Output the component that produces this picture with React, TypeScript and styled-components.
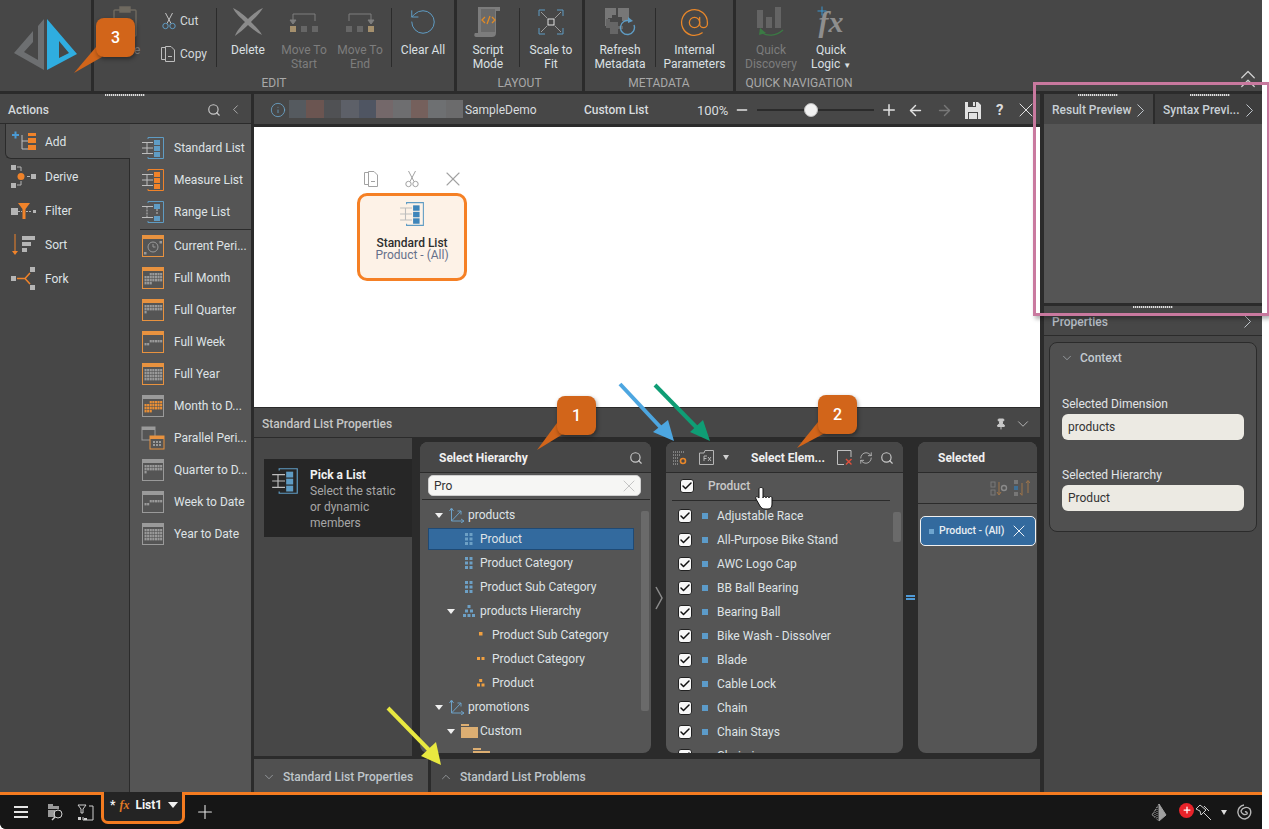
import React from 'react';
import styled, { createGlobalStyle } from 'styled-components';
import {
  ArrowLeft, ArrowRight, AtSign, ChevronDown, ChevronLeft, ChevronUp, ChevronsUp,
  Check, Info, Minus, Pin, Plus, RefreshCw, RotateCcw, Search, X,
} from 'lucide-react';

const GlobalStyle = createGlobalStyle`
  html, body { margin: 0; padding: 0; background: #fff; }
  body { font-family: Roboto, "Open Sans", "Liberation Sans", sans-serif; font-size: 12px; color: #dfe3e6; }
  * { box-sizing: border-box; }
  svg { flex: none; }
`;

const Page = styled.div`
  position: relative;
  width: 1269px;
  height: 829px;
  overflow: hidden;
  background: #fff;
`;

const Shell = styled.div`
  display: flex;
  flex-direction: column;
  width: 1262px;
  height: 829px;
  background: #2b2b2b;
  border-bottom-left-radius: 6px;
  overflow: hidden;
`;

/* ribbon */
const Ribbon = styled.header`
  display: flex;
  gap: 3px;
  height: 91px;
  flex: none;
`;

const LogoBox = styled.div`
  width: 91px;
  background: #474747;
`;

const RibbonGroup = styled.section<{ $w?: number }>`
  position: relative;
  display: flex;
  flex-direction: column;
  background: #474747;
  ${(p) => (p.$w ? `width: ${p.$w}px;` : 'flex: 1;')}
`;

const GroupInner = styled.div<{ $w?: number }>`
  display: flex;
  flex-direction: column;
  height: 100%;
  ${(p) => (p.$w ? `width: ${p.$w}px;` : '')}
`;

const GroupButtons = styled.div`
  display: flex;
  height: 75px;
`;

const GroupLabel = styled.div`
  text-align: center;
  font-size: 12px;
  line-height: 16px;
  color: #a9a9a9;
`;

const RibbonButton = styled.div<{ $w: number; $off?: boolean }>`
  width: ${(p) => p.$w}px;
  flex: none;
  display: flex;
  flex-direction: column;
  align-items: center;
  padding-top: 1px;
  text-align: center;
  white-space: nowrap;
  font-size: 12px;
  line-height: 14px;
  color: ${(p) => (p.$off ? '#7d7d7d' : '#dbe0e3')};
`;

const RibbonIcon = styled.div`
  height: 42px;
  display: flex;
  align-items: center;
  justify-content: center;
`;

const RibbonDivider = styled.div`
  width: 1px;
  height: 59px;
  margin-top: 8px;
  background: #2b2b2b;
  flex: none;
`;

const SmallColumn = styled.div`
  width: 60px;
  flex: none;
  display: flex;
  flex-direction: column;
  gap: 17px;
  padding: 13px 0 0 5px;
`;

const SmallButton = styled.div`
  display: flex;
  align-items: center;
  gap: 3px;
  height: 16px;
  color: #d5d9dc;
`;

const CopySlot = styled.span`
  margin-left: -2px;
  line-height: 0;
`;

const CollapseRibbon = styled.div`
  position: absolute;
  right: -1px;
  bottom: -3px;
  color: #cfcfcf;
  line-height: 0;
`;

const FxMark = styled.span`
  position: relative;
  display: block;
  height: 30px;
  font-family: "Liberation Serif", serif;
  font-style: italic;
  font-weight: 700;
  font-size: 30px;
  line-height: 30px;
  color: #8e8e8e;
`;

const FxPlus = styled.span`
  position: absolute;
  display: block;
  left: -4px;
  top: -3px;
  color: #3aa0e0;
  line-height: 0;
`;

const Caret = styled.span`
  font-size: 8px;
`;

/* workspace */
const Workspace = styled.main`
  flex: 1;
  min-height: 0;
  display: grid;
  grid-template-columns: 251px 786px 219px;
  grid-template-rows: minmax(0, 1fr);
  gap: 3px;
  margin-top: 3px;
`;

const Handle = styled.i<{ $left: number; $top?: number }>`
  position: absolute;
  left: ${(p) => p.$left}px;
  top: ${(p) => p.$top ?? 0}px;
  width: 40px;
  height: 2px;
  background: repeating-linear-gradient(90deg, #ddd 0 1px, #777 1px 2px);
`;

const LeftPanel = styled.aside`
  position: relative;
  display: flex;
  flex-direction: column;
  background: #474747;
`;

const PanelHeader = styled.div<{ $h?: number }>`
  display: flex;
  align-items: center;
  height: ${(p) => p.$h ?? 30}px;
  flex: none;
  padding: 2px 8px 0;
  font-weight: 500;
  color: #d3d8dc;
  border-bottom: 1px solid #2b2b2b;
`;

const HeaderTools = styled.div`
  margin-left: auto;
  display: flex;
  align-items: center;
  gap: 7px;
  color: #c8c8c8;
  line-height: 0;
`;

const LeftBody = styled.div`
  flex: 1;
  min-height: 0;
  display: flex;
`;

const ActionColumn = styled.div`
  width: 130px;
  flex: none;
  padding: 2px 0 0 5px;
  border-right: 1px solid #2b2b2b;
`;

const ActionRow = styled.div<{ $active?: boolean }>`
  display: flex;
  align-items: center;
  gap: 8px;
  height: 34px;
  padding-left: 6px;
  margin-right: ${(p) => (p.$active ? '-1px' : '0')};
  ${(p) => p.$active && `
    margin-top: -2px;
    padding-top: 2px;
    height: 35px;
    margin-bottom: 1px;
    background: #505050;
    border-left: 1px solid #2b2b2b;
    border-bottom: 1px solid #2b2b2b;
    border-bottom-left-radius: 6px;
    padding-left: 5px;
  `}
`;

const ActionIcon = styled.span`
  width: 26px;
  flex: none;
  display: flex;
  line-height: 0;
`;

const ListColumn = styled.div`
  flex: 1;
  background: #555;
  padding-top: 8px;
`;

const ListGroup = styled.div`
  margin-left: 10px;
  padding-bottom: 1px;
  border-bottom: 1px solid #2b2b2b;
`;

const ListRow = styled.div<{ $inset?: boolean }>`
  display: flex;
  align-items: center;
  gap: 9px;
  height: 32px;
  padding-left: ${(p) => (p.$inset ? '11px' : '1px')};
  white-space: nowrap;
`;

const CenterPanel = styled.div`
  display: flex;
  flex-direction: column;
  min-width: 0;
`;

const DocHeader = styled.div`
  display: flex;
  align-items: center;
  height: 30px;
  flex: none;
  background: #474747;
  padding: 2px 0 0 16px;
  color: #d8dcdf;
`;

const BlurStrip = styled.div`
  display: flex;
  height: 18px;
  margin: -2px 0 0 3px;
`;

const BlurCell = styled.i<{ $c: string }>`
  width: 17.4px;
  background: ${(p) => p.$c};
`;

const DocTitle = styled.span`
  margin-left: 2px;
  width: 119px;
`;

const DocKind = styled.span`
  width: 113px;
  font-weight: 500;
`;

const Zoom = styled.span`
  font-size: 13px;
  width: 37px;
`;

const SliderTrack = styled.div`
  position: relative;
  width: 117px;
  height: 2px;
  margin: 0 6px 0 7px;
  background: #2b2b2b;
`;

const SliderThumb = styled.div`
  position: absolute;
  left: 47px;
  top: -6px;
  width: 14px;
  height: 14px;
  border-radius: 50%;
  background: #f2f2f2;
  border: 1px solid #bbb;
`;

const DocTools = styled.div`
  display: flex;
  align-items: center;
  gap: 12px;
  line-height: 0;
  color: #e2e2e2;
`;

const PlusTool = styled(Plus)`
  margin-right: -3px;
`;

const CloseTool = styled(X)`
  margin: -4px;
`;

const HelpMark = styled.span`
  font-size: 15px;
  font-weight: 700;
  line-height: 16px;
  color: #dcdcdc;
  margin: 0 3px;
`;

const Canvas = styled.div`
  position: relative;
  margin-top: 3px;
  height: 280px;
  flex: none;
  background: #fff;
`;

const NodeTools = styled.div`
  position: absolute;
  left: 96px;
  top: 40px;
  display: grid;
  grid-template-columns: repeat(3, 41px);
  justify-items: center;
  align-items: center;
  height: 22px;
  color: #a2a2a2;
  line-height: 0;
`;

const NodeCard = styled.div`
  position: absolute;
  left: 103px;
  top: 66px;
  width: 110px;
  height: 88px;
  display: flex;
  flex-direction: column;
  align-items: center;
  padding-top: 5px;
  background: #fdf2e7;
  border: 3px solid #f58025;
  border-radius: 10px;
  line-height: 12px;
`;

const NodeTitle = styled.div`
  margin-top: 10px;
  font-weight: 500;
  color: #2e2e2e;
`;

const NodeSub = styled.div`
  color: #66708a;
`;

const PropsPane = styled.section`
  margin-top: 1px;
  flex: 1;
  min-height: 0;
  display: flex;
  flex-direction: column;
  background: #2b2b2b;
`;

const PropsHeader = styled(PanelHeader)`
  background: #474747;
  color: #c6c6c6;
`;

const PropsBody = styled.div`
  flex: 1;
  min-height: 0;
  display: flex;
  padding: 4px 3px 6px 0;
`;

const PickPane = styled.div`
  width: 158px;
  flex: none;
  margin: -4px 8px -3px 0;
  padding: 21px 0 0 10px;
  background: #474747;
`;

const PickBox = styled.div`
  display: flex;
  gap: 11px;
  height: 78px;
  padding: 8px 16px 0 7px;
  background: #262626;
  line-height: 16px;
  color: #a6a6a6;
`;

const PickTitle = styled.div`
  font-weight: 700;
  color: #f0f0f0;
`;

const Card = styled.div<{ $w: number }>`
  position: relative;
  width: ${(p) => p.$w}px;
  flex: none;
  display: flex;
  flex-direction: column;
  background: #555;
  border-radius: 8px;
  overflow: hidden;
`;

const CardHeader = styled.div`
  display: flex;
  align-items: center;
  height: 31px;
  flex: none;
  padding-top: 1px;
  background: #474747;
  border-bottom: 1px solid #2b2b2b;
  font-weight: 700;
  color: #f0f0f0;
`;

const HierTitle = styled.span`
  margin-left: 19px;
`;

const HierSearch = styled(Search)`
  margin-right: 8px;
`;

const SearchRow = styled.div`
  height: 27px;
  flex: none;
  margin: 0 1px 0 2px;
  padding: 2px 9px 0 6px;
  border-bottom: 1px solid #2b2b2b;
`;

const SearchInput = styled.div`
  display: flex;
  align-items: center;
  justify-content: space-between;
  height: 21px;
  padding: 0 1px 0 5px;
  border-radius: 5px;
  background: #f6f6f4;
  border: 1px solid #cfcfcf;
  color: #333;
  line-height: 0;
`;

const Tree = styled.div`
  padding: 4px 0 0 8px;
`;

const TreeRow = styled.div<{ $level: number; $selected?: boolean }>`
  display: flex;
  align-items: center;
  width: 206px;
  height: 22px;
  margin-bottom: 2px;
  padding-left: ${(p) => p.$level * 12 + 5}px;
  white-space: nowrap;
  border: 1px solid ${(p) => (p.$selected ? '#1f4a75' : 'transparent')};
  background: ${(p) => (p.$selected ? '#336a9e' : 'transparent')};
`;

const TreeCaret = styled.span<{ $show?: boolean }>`
  width: 12px;
  flex: none;
  margin-left: -1px;
  margin-right: 4px;
  display: flex;
  justify-content: center;
  &::before {
    content: '';
    display: ${(p) => (p.$show ? 'block' : 'none')};
    border-left: 4px solid transparent;
    border-right: 4px solid transparent;
    border-top: 5px solid #f0f0f0;
  }
`;

const TreeIcon = styled.span`
  width: 16px;
  flex: none;
  margin-right: 3px;
  display: flex;
  justify-content: center;
  line-height: 0;
`;

const ScrollThumb = styled.div<{ $top: number; $h: number; $left: number }>`
  position: absolute;
  left: ${(p) => p.$left}px;
  top: ${(p) => p.$top}px;
  width: 8px;
  height: ${(p) => p.$h}px;
  background: #6a6a6a;
  border-radius: 2px;
`;

const Gutter = styled.div`
  width: 15px;
  flex: none;
  display: flex;
  align-items: center;
  justify-content: center;
  color: #8c8c8c;
  line-height: 0;
`;

const EqualMark = styled.div`
  width: 9px;
  height: 5px;
  border-top: 2px solid #4f9ad6;
  border-bottom: 2px solid #4f9ad6;
`;

const ElemTools = styled.div<{ $left?: number; $gap: number }>`
  display: flex;
  align-items: center;
  gap: ${(p) => p.$gap}px;
  margin-left: ${(p) => p.$left ?? 0}px;
  line-height: 0;
  font-weight: 400;
`;

const ElemCaret = styled.span`
  margin-left: -3px;
  border-left: 3px solid transparent;
  border-right: 3px solid transparent;
  border-top: 5px solid #d0d0d0;
`;

const ElemTitle = styled.span`
  margin: 0 12px 0 22px;
  white-space: nowrap;
`;

const ElemLead = styled.div`
  display: flex;
  align-items: center;
  gap: 14px;
  height: 28px;
  flex: none;
  margin: 0 13px 0 6px;
  padding: 0 0 1px 8px;
  border-bottom: 1px solid #2b2b2b;
  font-weight: 500;
  color: #c8c8c8;
`;

const CheckBox = styled.span`
  width: 14px;
  height: 14px;
  flex: none;
  display: flex;
  align-items: center;
  justify-content: center;
  background: #f7f7f7;
  border: 1px solid #222;
  border-radius: 3px;
  color: #111;
`;

const ElemList = styled.div`
  padding: 3px 0 0 12px;
`;

const ElemRow = styled.div`
  display: flex;
  align-items: center;
  height: 24px;
  white-space: nowrap;
`;

const MemberDot = styled.i`
  width: 6px;
  height: 6px;
  margin: 0 9px 0 10px;
  background: #5c9bc9;
`;

const SelectedTitle = styled.span`
  margin-left: 20px;
`;

const SortRow = styled.div`
  display: flex;
  justify-content: flex-end;
  align-items: center;
  gap: 6px;
  height: 31px;
  flex: none;
  padding-right: 7px;
  border-bottom: 1px solid #2b2b2b;
  line-height: 0;
`;

const Chip = styled.div`
  display: flex;
  align-items: center;
  height: 30px;
  margin: 12px 1px 0 2px;
  padding: 0 6px 0 8px;
  background: #336a9e;
  border: 1px solid #f0f0f0;
  border-radius: 5px;
  font-size: 10.5px;
  font-weight: 500;
  color: #e8eef3;
  line-height: 0;
`;

const ChipDot = styled.i`
  width: 5px;
  height: 5px;
  margin-right: 5px;
  background: #6ea5cf;
`;

const ChipClose = styled.span`
  margin-left: auto;
  color: #fff;
`;

const BottomTabs = styled.div`
  display: flex;
  gap: 3px;
  height: 33px;
  flex: none;
`;

const BottomTab = styled.div<{ $grow?: boolean }>`
  display: flex;
  align-items: center;
  gap: 7px;
  padding: 2px 0 0 8px;
  font-weight: 500;
  color: #bfc5ca;
  background: #505050;
  line-height: 0;
  ${(p) => (p.$grow ? 'flex: 1; background: #474747;' : 'width: 174px;')}
`;

const RightPanel = styled.aside`
  position: relative;
  display: flex;
  flex-direction: column;
  background: #474747;
  border-left: 1px solid #2b2b2b;
`;

const PreviewTabs = styled.div`
  display: flex;
  gap: 2px;
  height: 30px;
  flex: none;
  background: #2b2b2b;
`;

const PreviewTab = styled.div<{ $active?: boolean }>`
  flex: ${(p) => (p.$active ? '0 0 109px' : '1')};
  display: flex;
  align-items: center;
  justify-content: space-between;
  padding: 2px 9px 0 8px;
  white-space: nowrap;
  font-weight: 500;
  color: #c8d0d6;
  background: ${(p) => (p.$active ? '#474747' : '#3d3d3d')};
  line-height: 0;
`;

const PreviewBody = styled.div`
  height: 179px;
  flex: none;
  background: #555;
  border-bottom: 3px solid #2b2b2b;
  box-sizing: content-box;
`;

const PropertiesHeader = styled(PanelHeader)`
  position: relative;
  justify-content: space-between;
  padding-right: 11px;
  color: #b5bcc4;
  line-height: 0;
`;

const ContextCard = styled.div`
  margin: 6px 5px 0 5px;
  height: 190px;
  padding: 0 12px;
  background: #505050;
  border: 1px solid #2b2b2b;
  border-radius: 8px;
`;

const ContextTitle = styled.div`
  display: flex;
  align-items: center;
  gap: 6px;
  height: 29px;
  margin: 0 0 24px -2px;
  font-weight: 500;
  color: #c3cad0;
`;

const FieldLabel = styled.div`
  line-height: 16px;
  margin-bottom: 2px;
  color: #e2e5e7;
`;

const FieldValue = styled.div`
  display: flex;
  align-items: center;
  height: 26px;
  margin-bottom: 27px;
  padding-left: 6px;
  background: #eceae3;
  border-radius: 6px;
  color: #333;
`;

/* footer */
const Footer = styled.footer`
  position: relative;
  display: flex;
  align-items: center;
  height: 37px;
  flex: none;
  padding: 0 9px 0 14px;
  background: #161616;
  border-top: 3px solid #f47b20;
  line-height: 0;
  color: #e4e4e4;
`;

const FooterIcons = styled.div`
  display: grid;
  grid-template-columns: 33px 30px 17px;
  align-items: center;
`;

const DocTab = styled.div`
  align-self: flex-start;
  display: flex;
  align-items: center;
  width: 84px;
  height: 32px;
  margin: -3px 0 0 7px;
  padding: 0 0 3px 6px;
  background: #242424;
  border: 3px solid #f47b20;
  border-top: none;
  border-bottom-left-radius: 7px;
  border-bottom-right-radius: 7px;
  line-height: 14px;
  font-weight: 700;
  color: #f4f4f4;
  white-space: nowrap;
`;

const TabFx = styled.span`
  margin: 0 6px 0 4px;
  font-family: "Liberation Serif", serif;
  font-style: italic;
  color: #e07b25;
`;

const TabCaret = styled.span`
  margin-left: 6px;
  border-left: 5px solid transparent;
  border-right: 5px solid transparent;
  border-top: 6px solid #f0f0f0;
`;

const AddTab = styled.div`
  margin-left: 9px;
`;

const FooterRight = styled.div`
  margin-left: auto;
  display: flex;
  align-items: center;
`;

const RedBadge = styled.span`
  width: 15px;
  height: 15px;
  margin: -4px 1px 0 12px;
  border-radius: 50%;
  display: flex;
  align-items: center;
  justify-content: center;
  background: #e8232a;
  color: #fff;
`;

const MiniCaret = styled.span`
  margin: 0 10px 0 9px;
  border-left: 3px solid transparent;
  border-right: 3px solid transparent;
  border-top: 5px solid #ddd;
`;

/* annotations lying over the screenshot */
const Overlay = styled.svg`
  position: absolute;
  inset: 0;
  pointer-events: none;
`;

const PinkFrame = styled.div`
  position: absolute;
  left: 1033px;
  top: 82px;
  width: 236px;
  height: 234px;
  border: 3px solid #c9799f;
  border-right-width: 2px;
  box-shadow: 2px 3px 4px rgba(0, 0, 0, 0.3);
  pointer-events: none;
`;

const Callout = styled.div<{ $x: number; $y: number }>`
  position: absolute;
  left: ${(p) => p.$x}px;
  top: ${(p) => p.$y}px;
  width: 39px;
  height: 39px;
  display: flex;
  align-items: center;
  justify-content: center;
  border-radius: 8px;
  background: #d2651a;
  color: #fff;
  font-size: 16px;
  font-weight: 500;
  box-shadow: 1px 2px 4px rgba(0, 0, 0, 0.4);
`;

/* drawings */
const Logo = () => (
  <svg width="91" height="91" viewBox="0 0 91 91">
    <polygon fill="#6d6f71" points="44,19 44,70 14,53 33,31 33,42 24,52 38,60 38,26" />
    <path fill="#2fade0" fillRule="evenodd" d="M47 19 L77 54 L47 70 Z M59 41 L69 53 L59 58 Z" />
  </svg>
);

const PasteIcon = () => (
  <svg width="26" height="32" viewBox="0 0 26 32" fill="none" stroke="#6f6a60" strokeWidth="1.4">
    <rect x="2" y="4" width="22" height="26" rx="1" />
    <rect x="8" y="1" width="10" height="5" fill="#6f6a60" />
  </svg>
);

const CutIcon = ({ blade = '#c4c4c4', ring = '#5f9cc4' }: { blade?: string; ring?: string }) => (
  <svg width="16" height="18" viewBox="0 0 16 18" fill="none">
    <path d="M4.500 1L10 11.500M11.500 1L6 11.500" stroke={blade} />
    <circle cx="4.500" cy="14" r="2.700" stroke={ring} />
    <circle cx="11.500" cy="14" r="2.700" stroke={ring} />
  </svg>
);

const CopyIcon = ({ c = '#bdbdbd', s = 18 }: { c?: string; s?: number }) => (
  <svg width={s} height={s} viewBox="0 0 18 18" fill="none" stroke={c}>
    <path d="M6 2.5H2.5V14.5H6" />
    <path d="M6.5 1.5H12L15.5 5V16.5H6.5Z" />
    <path d="M9 11.5H13" />
  </svg>
);

const DeleteIcon = () => (
  <svg width="32" height="30" viewBox="0 0 32 30" fill="#8b8b8b">
    <path d="M1 1 C6 3 13 9 16 12 C20 8 26 3 31 1 C28 6 22 12 19 15 C23 19 28 24 30 28 C26 26 19 21 16 18 C12 22 7 26 3 29 C4 25 9 19 13 15 C9 11 3 6 1 1Z" />
  </svg>
);

const MoveIcon = ({ end }: { end?: boolean }) => (
  <svg width="30" height="20" viewBox="0 0 30 20" fill="none" stroke="#7e7e7e">
    <g transform={end ? 'translate(30 0) scale(-1 1)' : undefined}>
      <path d="M26 9V2H4V8" />
      <path d="M1 8H7L4 12Z" fill="#7e7e7e" />
    </g>
    <rect x="1" y="14" width="6" height="6" fill={end ? '#666' : '#a5906d'} stroke="none" />
    <rect x="12" y="14" width="6" height="6" fill="#666" stroke="none" />
    <rect x="23" y="14" width="6" height="6" fill={end ? '#a5906d' : '#666'} stroke="none" />
  </svg>
);

const ScriptIcon = () => (
  <svg width="28" height="34" viewBox="0 0 28 34">
    <path d="M4 2H26V6H22V28C22 31 20 32 18 32H2C0 32 0 29 1 28H4Z" fill="#7c7c7c" />
    <path d="M7 4H21V27H7Z" fill="#6a6a6a" />
    <path d="M11 12L8 15L11 18M18 12L21 15L18 18M16 11L13 19" fill="none" stroke="#e08a25" strokeWidth="1.3" />
  </svg>
);

const ScaleIcon = () => (
  <svg width="26" height="26" viewBox="0 0 26 26" fill="none">
    <path d="M1 7V1H7M19 1H25V7M25 19V25H19M7 25H1V19" stroke="#5f9cc4" />
    <path d="M3 3L9 9M23 3L17 9M3 23L9 17M23 23L17 17" stroke="#9a9a9a" />
    <rect x="10" y="10" width="6" height="6" stroke="#e0e0e0" />
  </svg>
);

const RefreshMetaIcon = () => (
  <svg width="32" height="30" viewBox="0 0 32 30">
    <path d="M1 1H12V8H8V11H4V19H1Z" fill="#777" />
    <path d="M14 1H25V14H18V10H14Z" fill="#777" />
    <path d="M2 21V12H6V15H14V19H19V22H14V27H6V21Z" fill="#666" />
    <path d="M30 18A7 7 0 1 1 26 14" fill="none" stroke="#5f9cc4" strokeWidth="1.4" />
    <path d="M24 10V16L29 14Z" fill="#5f9cc4" />
  </svg>
);

const DiscoveryIcon = () => (
  <svg width="30" height="30" viewBox="0 0 30 30">
    <rect x="1" y="3" width="6" height="18" fill="#646464" />
    <rect x="10" y="10" width="6" height="11" fill="#646464" />
    <rect x="19" y="0" width="6" height="21" fill="#646464" />
    <path d="M5 25C11 30 20 29 27 23" fill="none" stroke="#3b7a44" strokeWidth="1.3" />
    <path d="M4 21L3 28L10 26Z" fill="#3b7a44" />
  </svg>
);

const SaveIcon = () => (
  <svg width="16" height="17" viewBox="0 0 16 17" fill="#e2e2e2">
    <path d="M0 0H3V5H11V0H13L16 3V17H0Z" />
    <rect x="8" y="0" width="2" height="4" />
    <rect x="3" y="10" width="10" height="7" fill="#474747" />
    <rect x="4" y="11" width="8" height="6" />
  </svg>
);

const ChevronThin = () => (
  <svg width="7" height="13" viewBox="0 0 7 13" fill="none" stroke="#c0c6cc">
    <path d="M0.5 0.5L6.500 6.500L0.500 12.500" />
  </svg>
);

const GutterChevron = () => (
  <svg width="8" height="24" viewBox="0 0 8 24" fill="none" stroke="#8c8c8c" strokeWidth="1.500">
    <path d="M1 1L7 12L1 23" />
  </svg>
);

const ListIcon = ({ c = '#5f9cc4', fill = '#5f9cc4', s = 24 }: { c?: string; fill?: string; s?: number }) => (
  <svg width={s} height={s} viewBox="0 0 24 24" fill="none">
    <path d="M1 6.5H12M1 12H12M1 17.5H12M6 6.5V17.5" stroke="#bdbdbd" />
    <path d="M7 3V1.5H22.5V22.5H7V21" stroke={c} />
    <rect x="13" y="4" width="6" height="5" fill={fill} />
    <rect x="13" y="10" width="6" height="5" fill={fill} />
    <rect x="13" y="16" width="6" height="5" fill={fill} />
  </svg>
);

const RangeIcon = () => (
  <svg width="24" height="24" viewBox="0 0 24 24" fill="none">
    <path d="M1 6.5H12M1 17.5H12" stroke="#bdbdbd" />
    <path d="M6 6.5V17.5M16 9V15" stroke="#bdbdbd" strokeDasharray="2 1" />
    <path d="M7 3V1.5H22.5V22.5H7V21" stroke="#5f9cc4" />
    <rect x="13" y="4" width="6" height="5" fill="#5f9cc4" />
    <rect x="13" y="16" width="6" height="5" fill="#5f9cc4" />
  </svg>
);

type CalendarProps = { rows: string[]; frame?: string; clock?: boolean };

const CalendarIcon = ({ rows, frame = '#e8923f', clock }: CalendarProps) => (
  <svg width="24" height="24" viewBox="0 0 24 24" fill="none">
    <rect x="1.5" y="1.5" width="21" height="21" stroke={frame} />
    <rect x="1" y="1" width="22" height="4" fill={frame} />
    {rows.map((row, r) =>
      row.split('').map((ch, i) =>
        ch === ' ' ? null : (
          <rect key={`${r}-${i}`} x={3.5 + i * 2.6} y={7 + r * 3} width="2.1" height="2.4" fill={ch === 'o' ? '#ea8f35' : '#9a9a9a'} />
        ),
      ),
    )}
    {clock && (
      <>
        <circle cx="12" cy="13" r="5" stroke="#9a9a9a" />
        <path d="M12 10V13H14.5" stroke="#9a9a9a" />
        <rect x="3" y="18" width="2.500" height="2.500" fill="#9a9a9a" />
        <rect x="18.500" y="7" width="2.500" height="2.500" fill="#9a9a9a" />
      </>
    )}
  </svg>
);

const ParallelIcon = () => (
  <svg width="24" height="24" viewBox="0 0 24 24" fill="none">
    <rect x="1" y="1" width="13" height="13" stroke="#9a9a9a" />
    <rect x="1" y="1" width="13" height="3" fill="#9a9a9a" />
    <rect x="9" y="10" width="14" height="13" fill="#555" stroke="#e8923f" />
    <rect x="9" y="10" width="14" height="3" fill="#e8923f" />
    <path d="M12 16H20M12 19H20" stroke="#9a9a9a" strokeWidth="2" strokeDasharray="2 1" />
  </svg>
);

const AddIcon = () => (
  <svg width="26" height="26" viewBox="0 0 26 26" fill="none">
    <path d="M1 6H8M4.500 2.500V9.500" stroke="#4a9ad4" strokeWidth="2" />
    <path d="M11 6V20H17M11 12H17" stroke="#bdbdbd" />
    <rect x="17" y="4" width="8" height="3" fill="#f0832a" />
    <rect x="17" y="9" width="8" height="5" fill="#f0832a" />
    <rect x="17" y="16" width="8" height="5" fill="#f0832a" />
  </svg>
);

const DeriveIcon = () => (
  <svg width="26" height="24" viewBox="0 0 26 24" fill="none">
    <rect x="0" y="0" width="5" height="5" fill="#b5b5b5" />
    <rect x="0" y="18" width="5" height="5" fill="#b5b5b5" />
    <rect x="20" y="9" width="5" height="5" fill="#b5b5b5" />
    <path d="M6 2H10V6M6 20H10V16M16 11.500H19" stroke="#b5b5b5" />
    <circle cx="10" cy="11.500" r="3.500" fill="#f0832a" />
  </svg>
);

const FilterIcon = () => (
  <svg width="26" height="16" viewBox="0 0 26 16" fill="none">
    <rect x="0" y="5" width="7" height="7" fill="#b5b5b5" />
    <path d="M7 0H19L14.500 6V16H11.500V6Z" fill="#f0832a" />
    <path d="M7 8.500H11M15 8.500H21" stroke="#b5b5b5" strokeDasharray="2 1" />
    <rect x="22" y="7" width="3" height="3" fill="#b5b5b5" />
  </svg>
);

const SortIcon = () => (
  <svg width="24" height="22" viewBox="0 0 24 22" fill="none">
    <path d="M4 0V18" stroke="#f0832a" />
    <path d="M1 17H7L4 21Z" fill="#f0832a" />
    <rect x="11" y="2" width="13" height="4" fill="#b5b5b5" />
    <rect x="11" y="8" width="9" height="4" fill="#b5b5b5" />
    <rect x="11" y="14" width="5" height="4" fill="#b5b5b5" />
  </svg>
);

const ForkIcon = () => (
  <svg width="26" height="24" viewBox="0 0 26 24" fill="none">
    <rect x="0" y="9" width="5" height="5" fill="#b5b5b5" />
    <rect x="19" y="0" width="5" height="5" fill="#b5b5b5" />
    <rect x="19" y="18" width="5" height="5" fill="#b5b5b5" />
    <path d="M6 11.500H14L19 6M14 11.500L19 17" stroke="#f0832a" strokeWidth="1.500" />
  </svg>
);

const DimensionIcon = () => (
  <svg width="16" height="16" viewBox="0 0 16 16" fill="none" stroke="#6da0c5">
    <path d="M2.500 2V14H15M2.500 14L12 4M12 4H8.500M12 4V7.500" />
    <path d="M0.500 4L2.500 1L4.500 4M12 12L15 14L12 16" />
  </svg>
);

const LevelGrid = ({ c = '#6da0c5' }: { c?: string }) => (
  <svg width="8" height="12" viewBox="0 0 8 12" fill={c}>
    {[0, 4.5, 9].map((y) => (
      <g key={y}>
        <rect x="0" y={y} width="3" height="3" />
        <rect x="4.500" y={y} width="3" height="3" />
      </g>
    ))}
  </svg>
);

const HierarchyIcon = () => (
  <svg width="12" height="12" viewBox="0 0 12 12" fill="#6da0c5">
    <rect x="4.500" y="0" width="3" height="3" />
    <rect x="2" y="4.500" width="3" height="3" />
    <rect x="7" y="4.500" width="3" height="3" />
    <rect x="0" y="9" width="3" height="3" />
    <rect x="4.500" y="9" width="3" height="3" />
    <rect x="9" y="9" width="3" height="3" />
  </svg>
);

const LevelDots = ({ n }: { n: 1 | 2 | 3 }) => (
  <svg width="8" height="8" viewBox="0 0 8 8" fill="#f0a040">
    {n === 1 && <rect x="2" y="1" width="3.500" height="3.500" />}
    {n === 2 && (
      <>
        <rect x="0" y="2" width="3" height="3" />
        <rect x="4.500" y="2" width="3" height="3" />
      </>
    )}
    {n === 3 && (
      <>
        <rect x="2.200" y="0" width="3" height="3" />
        <rect x="0" y="4.500" width="3" height="3" />
        <rect x="4.500" y="4.500" width="3" height="3" />
      </>
    )}
  </svg>
);

const FolderIcon = () => (
  <svg width="17" height="14" viewBox="0 0 17 14" fill="#dcae72">
    <path d="M0 0H8V2H0Z" />
    <path d="M0 3H17V14H0Z" />
  </svg>
);

const ListGearIcon = () => (
  <svg width="14" height="14" viewBox="0 0 14 14" fill="none">
    <path d="M0 1H11M0 4H8M0 7H6M0 10H5M0 13H6" stroke="#bbb" strokeDasharray="1 1" />
    <circle cx="10" cy="10" r="2.500" stroke="#e8872a" strokeWidth="1.600" />
  </svg>
);

const FxBoxIcon = () => (
  <svg width="15" height="15" viewBox="0 0 15 15" fill="none" stroke="#b5b5b5">
    <path d="M0.500 3V14.500H14.500V0.500H6L5 3Z" />
    <path d="M5 11V6H8M5 8.500H7.500M9 7L12 11M12 7L9 11" />
  </svg>
);

const ClearIcon = () => (
  <svg width="15" height="15" viewBox="0 0 15 15" fill="none">
    <path d="M14 7V0.500H0.500V14.500H7" stroke="#c0c0c0" />
    <path d="M9 9L14.500 14.500M14.500 9L9 14.500" stroke="#e0503c" strokeWidth="1.400" />
  </svg>
);

const SortAzIcon = () => (
  <svg width="18" height="15" viewBox="0 0 18 15" fill="none">
    <rect x="1" y="1" width="4" height="5" stroke="#7a7a7a" />
    <rect x="1" y="9" width="4" height="5" stroke="#7a7a7a" />
    <path d="M9 1V13" stroke="#a0764a" />
    <path d="M7 11L9 14L11 11" stroke="#a0764a" />
    <circle cx="14" cy="7" r="2.500" stroke="#8a8a8a" strokeWidth="1.400" />
  </svg>
);

const SortMoveIcon = () => (
  <svg width="16" height="16" viewBox="0 0 16 16" fill="none">
    <rect x="0" y="0" width="4" height="4" fill="#777" />
    <rect x="0" y="6" width="4" height="4" fill="#3f6f95" />
    <rect x="0" y="12" width="4" height="4" fill="#777" />
    <path d="M8 3V15M6 13L8 15.500M14 1V13M12 3L14 0.500L16 3" stroke="#a0764a" />
  </svg>
);

const HamburgerIcon = () => (
  <svg width="14" height="12" viewBox="0 0 14 12" fill="#e4e4e4">
    <rect y="0" width="14" height="2" />
    <rect y="5" width="14" height="2" />
    <rect y="10" width="14" height="2" />
  </svg>
);

const FolderSearchIcon = () => (
  <svg width="17" height="18" viewBox="0 0 17 18" fill="none" stroke="#d0d0d0">
    <path d="M1 1H6V3H12V6H1Z" fill="#9a9a9a" stroke="none" />
    <path d="M1 7H8V14H1Z" fill="#9a9a9a" stroke="none" />
    <circle cx="11" cy="11" r="4" />
    <path d="M8 14L5 17" strokeWidth="1.400" />
  </svg>
);

const FilterBoardIcon = () => (
  <svg width="17" height="17" viewBox="0 0 17 17" fill="none" stroke="#cfcfcf">
    <path d="M1 1H9L6 5V9H4V5Z" />
    <path d="M12 2H16V16H6V13" />
    <rect x="1" y="13" width="3" height="3" fill="#cfcfcf" stroke="none" />
    <rect x="7" y="14" width="3" height="2" fill="#cfcfcf" stroke="none" />
  </svg>
);

const PyramidIcon = () => (
  <svg width="16" height="19" viewBox="0 0 16 19" fill="none" stroke="#a0a0a0">
    <path d="M8 1V18L15 12Z" fill="#a0a0a0" />
    <path d="M8 1L1 12L8 18M6 4V16M4 7V14M2 10V13" strokeDasharray="1 1" />
  </svg>
);

const PinOutlineIcon = () => (
  <svg width="17" height="17" viewBox="0 0 17 17" fill="none" stroke="#cfcfcf">
    <path d="M5 1L1 5L5 7L6 11L11 6Z" />
    <path d="M9 9L16 16M9 2L14 7" />
  </svg>
);

const SpiralIcon = () => (
  <svg width="16" height="16" viewBox="0 0 16 16" fill="none" stroke="#b8b8b8" strokeWidth="1.400">
    <path d="M8 8A1.500 1.500 0 0 1 10 10A4 4 0 0 1 4 7A5.500 5.500 0 0 1 13 5A7 7 0 0 1 8 15A7 7 0 0 1 1 9A7 7 0 0 1 7 1" />
  </svg>
);

const blur = ['#555a5f', '#6b5551', '#505154', '#5d6068', '#4f5562', '#74686a', '#6e6e70', '#75605c', '#6e7072', '#6b6b6c'];

const fullMonth = ['  #####', '#######', '#######', '### '];
const fullQuarter = ['#######', '#######', '#'];
const fullWeek = ['', '  #####', '##'];
const fullYear = ['#######', '#######', '#######', '#######'];
const monthToDate = ['  ooooo', 'ooooooo', 'ooooooo', 'ooo'];

const elements = [
  'Adjustable Race', 'All-Purpose Bike Stand', 'AWC Logo Cap', 'BB Ball Bearing', 'Bearing Ball',
  'Bike Wash - Dissolver', 'Blade', 'Cable Lock', 'Chain', 'Chain Stays', 'Chainring',
];

export default function App() {
  return (
    <Page>
      <GlobalStyle />
      <Shell>
        <Ribbon>
          <LogoBox><Logo /></LogoBox>
          <RibbonGroup $w={360}>
            <GroupButtons>
              <RibbonButton $w={62} $off><RibbonIcon><PasteIcon /></RibbonIcon>Paste</RibbonButton>
              <SmallColumn>
                <SmallButton><CutIcon />Cut</SmallButton>
                <SmallButton><CopySlot><CopyIcon /></CopySlot>Copy</SmallButton>
              </SmallColumn>
              <RibbonDivider />
              <RibbonButton $w={62}><RibbonIcon><DeleteIcon /></RibbonIcon>Delete</RibbonButton>
              <RibbonButton $w={50} $off><RibbonIcon><MoveIcon /></RibbonIcon><span>Move To<br />Start</span></RibbonButton>
              <RibbonButton $w={62} $off><RibbonIcon><MoveIcon end /></RibbonIcon><span>Move To<br />End</span></RibbonButton>
              <RibbonDivider />
              <RibbonButton $w={62}><RibbonIcon><RotateCcw size={30} strokeWidth={0.8} color="#5f9cc4" /></RibbonIcon>Clear All</RibbonButton>
            </GroupButtons>
            <GroupLabel>EDIT</GroupLabel>
          </RibbonGroup>
          <RibbonGroup $w={125}>
            <GroupButtons>
              <RibbonButton $w={62}><RibbonIcon><ScriptIcon /></RibbonIcon><span>Script<br />Mode</span></RibbonButton>
              <RibbonDivider />
              <RibbonButton $w={62}><RibbonIcon><ScaleIcon /></RibbonIcon><span>Scale to<br />Fit</span></RibbonButton>
            </GroupButtons>
            <GroupLabel>LAYOUT</GroupLabel>
          </RibbonGroup>
          <RibbonGroup $w={148}>
            <GroupButtons>
              <RibbonButton $w={70}><RibbonIcon><RefreshMetaIcon /></RibbonIcon><span>Refresh<br />Metadata</span></RibbonButton>
              <RibbonDivider />
              <RibbonButton $w={77}><RibbonIcon><AtSign size={31} strokeWidth={1} color="#e8872a" /></RibbonIcon><span>Internal<br />Parameters</span></RibbonButton>
            </GroupButtons>
            <GroupLabel>METADATA</GroupLabel>
          </RibbonGroup>
          <RibbonGroup>
            <GroupInner $w={126}>
              <GroupButtons>
                <RibbonButton $w={70} $off><RibbonIcon><DiscoveryIcon /></RibbonIcon><span>Quick<br />Discovery</span></RibbonButton>
                <RibbonButton $w={50}>
                  <RibbonIcon>
                    <FxMark><FxPlus><Plus size={14} strokeWidth={1.5} /></FxPlus>fx</FxMark>
                  </RibbonIcon>
                  <span>Quick<br />Logic <Caret>▼</Caret></span>
                </RibbonButton>
              </GroupButtons>
              <GroupLabel>QUICK NAVIGATION</GroupLabel>
            </GroupInner>
            <CollapseRibbon><ChevronsUp size={30} strokeWidth={1} /></CollapseRibbon>
          </RibbonGroup>
        </Ribbon>

        <Workspace>
          <LeftPanel>
            <Handle $left={105} />
            <PanelHeader>
              Actions
              <HeaderTools>
                <Search size={14} />
                <ChevronLeft size={15} strokeWidth={1.2} />
              </HeaderTools>
            </PanelHeader>
            <LeftBody>
              <ActionColumn>
                <ActionRow $active><ActionIcon><AddIcon /></ActionIcon>Add</ActionRow>
                <ActionRow><ActionIcon><DeriveIcon /></ActionIcon>Derive</ActionRow>
                <ActionRow><ActionIcon><FilterIcon /></ActionIcon>Filter</ActionRow>
                <ActionRow><ActionIcon><SortIcon /></ActionIcon>Sort</ActionRow>
                <ActionRow><ActionIcon><ForkIcon /></ActionIcon>Fork</ActionRow>
              </ActionColumn>
              <ListColumn>
                <ListGroup>
                  <ListRow><ListIcon />Standard List</ListRow>
                  <ListRow><ListIcon c="#f0832a" fill="#f0832a" />Measure List</ListRow>
                  <ListRow><RangeIcon />Range List</ListRow>
                </ListGroup>
                <ListRow $inset><CalendarIcon rows={[]} clock />Current Peri...</ListRow>
                <ListRow $inset><CalendarIcon rows={fullMonth} />Full Month</ListRow>
                <ListRow $inset><CalendarIcon rows={fullQuarter} />Full Quarter</ListRow>
                <ListRow $inset><CalendarIcon rows={fullWeek} />Full Week</ListRow>
                <ListRow $inset><CalendarIcon rows={fullYear} />Full Year</ListRow>
                <ListRow $inset><CalendarIcon rows={monthToDate} frame="#9a9a9a" />Month to D...</ListRow>
                <ListRow $inset><ParallelIcon />Parallel Peri...</ListRow>
                <ListRow $inset><CalendarIcon rows={fullQuarter} frame="#9a9a9a" />Quarter to D...</ListRow>
                <ListRow $inset><CalendarIcon rows={fullWeek} frame="#9a9a9a" />Week to Date</ListRow>
                <ListRow $inset><CalendarIcon rows={fullYear} frame="#9a9a9a" />Year to Date</ListRow>
              </ListColumn>
            </LeftBody>
          </LeftPanel>

          <CenterPanel>
            <DocHeader>
              <Info size={16} strokeWidth={1.2} color="#6da9d0" />
              <BlurStrip>{blur.map((c, i) => <BlurCell key={i} $c={c} />)}</BlurStrip>
              <DocTitle>SampleDemo</DocTitle>
              <DocKind>Custom List</DocKind>
              <Zoom>100%</Zoom>
              <DocTools>
                <Minus size={16} />
              </DocTools>
              <SliderTrack><SliderThumb /></SliderTrack>
              <DocTools>
                <PlusTool size={18} />
                <ArrowLeft size={17} />
                <ArrowRight size={17} color="#777" />
                <SaveIcon />
                <HelpMark>?</HelpMark>
                <CloseTool size={24} strokeWidth={1} />
              </DocTools>
            </DocHeader>
            <Canvas>
              <NodeTools>
                <CopyIcon c="#a2a2a2" />
                <CutIcon blade="#a2a2a2" ring="#a2a2a2" />
                <X size={24} strokeWidth={1.1} />
              </NodeTools>
              <NodeCard>
                <ListIcon c="#5f9cc4" fill="#3e85ba" s={26} />
                <NodeTitle>Standard List</NodeTitle>
                <NodeSub>Product - (All)</NodeSub>
              </NodeCard>
            </Canvas>
            <PropsPane>
              <PropsHeader>
                Standard List Properties
                <HeaderTools>
                  <Pin size={12} fill="#c8c8c8" />
                  <ChevronDown size={18} strokeWidth={1.1} />
                </HeaderTools>
              </PropsHeader>
              <PropsBody>
                <PickPane>
                  <PickBox>
                    <ListIcon s={28} />
                    <div>
                      <PickTitle>Pick a List</PickTitle>
                      Select the static or dynamic members
                    </div>
                  </PickBox>
                </PickPane>
                <Card $w={231}>
                  <CardHeader>
                    <HierTitle>Select Hierarchy</HierTitle>
                    <HeaderTools><HierSearch size={14} color="#c8c8c8" /></HeaderTools>
                  </CardHeader>
                  <SearchRow>
                    <SearchInput>Pro<X size={20} strokeWidth={1} color="#bbb" /></SearchInput>
                  </SearchRow>
                  <Tree>
                    <TreeRow $level={0}><TreeCaret $show /><TreeIcon><DimensionIcon /></TreeIcon>products</TreeRow>
                    <TreeRow $level={1} $selected><TreeCaret /><TreeIcon><LevelGrid /></TreeIcon>Product</TreeRow>
                    <TreeRow $level={1}><TreeCaret /><TreeIcon><LevelGrid /></TreeIcon>Product Category</TreeRow>
                    <TreeRow $level={1}><TreeCaret /><TreeIcon><LevelGrid /></TreeIcon>Product Sub Category</TreeRow>
                    <TreeRow $level={1}><TreeCaret $show /><TreeIcon><HierarchyIcon /></TreeIcon>products Hierarchy</TreeRow>
                    <TreeRow $level={2}><TreeCaret /><TreeIcon><LevelDots n={1} /></TreeIcon>Product Sub Category</TreeRow>
                    <TreeRow $level={2}><TreeCaret /><TreeIcon><LevelDots n={2} /></TreeIcon>Product Category</TreeRow>
                    <TreeRow $level={2}><TreeCaret /><TreeIcon><LevelDots n={3} /></TreeIcon>Product</TreeRow>
                    <TreeRow $level={0}><TreeCaret $show /><TreeIcon><DimensionIcon /></TreeIcon>promotions</TreeRow>
                    <TreeRow $level={1}><TreeCaret $show /><TreeIcon><FolderIcon /></TreeIcon>Custom</TreeRow>
                    <TreeRow $level={2}><TreeCaret $show /><TreeIcon><FolderIcon /></TreeIcon></TreeRow>
                  </Tree>
                  <ScrollThumb $left={221} $top={69} $h={200} />
                </Card>
                <Gutter><GutterChevron /></Gutter>
                <Card $w={237}>
                  <CardHeader>
                    <ElemTools $left={7} $gap={12}>
                      <ListGearIcon />
                      <FxBoxIcon />
                      <ElemCaret />
                    </ElemTools>
                    <ElemTitle>Select Elem...</ElemTitle>
                    <ElemTools $gap={7}>
                      <ClearIcon />
                      <RefreshCw size={14} strokeWidth={1.4} color="#c0c0c0" />
                      <Search size={14} color="#c8c8c8" />
                    </ElemTools>
                  </CardHeader>
                  <ElemLead><CheckBox><Check size={12} strokeWidth={3} /></CheckBox>Product</ElemLead>
                  <ElemList>
                    {elements.map((name) => (
                      <ElemRow key={name}>
                        <CheckBox><Check size={12} strokeWidth={3} /></CheckBox>
                        <MemberDot />
                        {name}
                      </ElemRow>
                    ))}
                  </ElemList>
                  <ScrollThumb $left={227} $top={70} $h={30} />
                </Card>
                <Gutter><EqualMark /></Gutter>
                <Card $w={119}>
                  <CardHeader><SelectedTitle>Selected</SelectedTitle></CardHeader>
                  <SortRow><SortAzIcon /><SortMoveIcon /></SortRow>
                  <Chip><ChipDot />Product - (All)<ChipClose><X size={20} strokeWidth={1.1} /></ChipClose></Chip>
                </Card>
              </PropsBody>
              <BottomTabs>
                <BottomTab><ChevronDown size={14} strokeWidth={1} />Standard List Properties</BottomTab>
                <BottomTab $grow><ChevronUp size={14} strokeWidth={1} />Standard List Problems</BottomTab>
              </BottomTabs>
            </PropsPane>
          </CenterPanel>

          <RightPanel>
            <Handle $left={34} />
            <Handle $left={146} />
            <PreviewTabs>
              <PreviewTab $active>Result Preview<ChevronThin /></PreviewTab>
              <PreviewTab>Syntax Previ...<ChevronThin /></PreviewTab>
            </PreviewTabs>
            <PreviewBody />
            <PropertiesHeader>
              <Handle $left={89} />
              Properties
              <ChevronThin />
            </PropertiesHeader>
            <ContextCard>
              <ContextTitle><ChevronDown size={14} strokeWidth={1} />Context</ContextTitle>
              <FieldLabel>Selected Dimension</FieldLabel>
              <FieldValue>products</FieldValue>
              <FieldLabel>Selected Hierarchy</FieldLabel>
              <FieldValue>Product</FieldValue>
            </ContextCard>
          </RightPanel>
        </Workspace>

        <Footer>
          <FooterIcons>
            <HamburgerIcon />
            <FolderSearchIcon />
            <FilterBoardIcon />
          </FooterIcons>
          <DocTab>*<TabFx>fx</TabFx>List1<TabCaret /></DocTab>
          <AddTab><Plus size={22} strokeWidth={1.2} /></AddTab>
          <FooterRight>
            <PyramidIcon />
            <RedBadge><Plus size={10} strokeWidth={3} /></RedBadge>
            <PinOutlineIcon />
            <MiniCaret />
            <SpiralIcon />
          </FooterRight>
        </Footer>
      </Shell>

      <PinkFrame />
      <Overlay width="1269" height="829" viewBox="0 0 1269 829">
        <polygon fill="#d2651a" points="96,47 102,57 74,73" />
        <polygon fill="#d2651a" points="557,423 563,434 537,450" />
        <polygon fill="#d2651a" points="818,422 825,433 797,448" />
        <path d="M620 384L664 431" stroke="#4da6e0" strokeWidth="4" />
        <polygon fill="#4da6e0" points="674,441 653,432 668,420" />
        <path d="M655 385L698 429" stroke="#0f9d75" strokeWidth="4" />
        <polygon fill="#0f9d75" points="710,441 690,432 703,420" />
        <path d="M388 708L430 751" stroke="#e8e840" strokeWidth="4" />
        <polygon fill="#e8e840" points="441,765 421,756 436,742" />
        <path d="M759 489l0 9c-2-2-4-2-3 1l4 7c1 2 3 3 5 3h3c3 0 4-2 4-5v-6c0-2-3-2-3 0 0-2-3-2-3 0 0-2-3-2-3 0v-9c0-2-4-2-4 0z" fill="#fff" stroke="#111" strokeWidth="1" />
      </Overlay>
      <Callout $x={96} $y={18}>3</Callout>
      <Callout $x={557} $y={396}>1</Callout>
      <Callout $x={818} $y={395}>2</Callout>
    </Page>
  );
}
